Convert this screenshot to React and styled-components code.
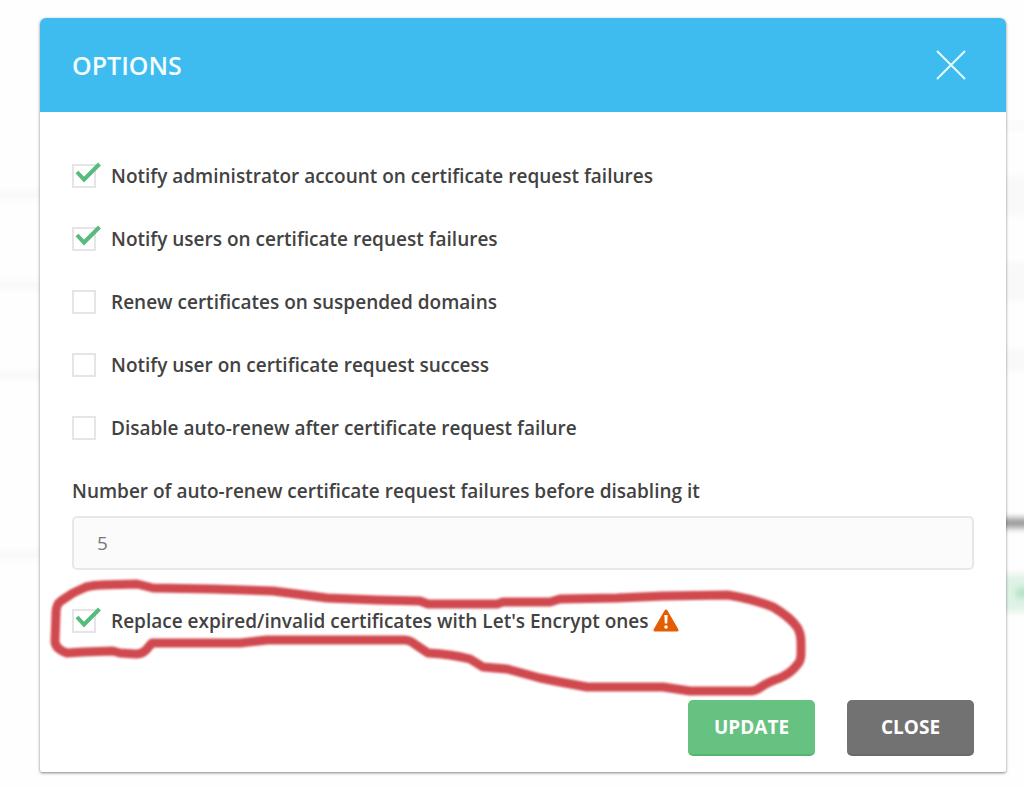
import React, { useState } from 'react';
import styled, { createGlobalStyle } from 'styled-components';

const GlobalStyle = createGlobalStyle`
  * {
    box-sizing: border-box;
  }
  body {
    margin: 0;
    background: #fefefe;
    color: #424242;
    font-family: 'Open Sans', 'Noto Sans', sans-serif;
  }
`;

const Page = styled.main`
  position: relative;
  min-height: 100vh;
  padding: 18px 18px 14px 40px;
  overflow: hidden;
`;

/* blurred page behind the dialog */
const Backdrop = styled.div`
  position: absolute;
  inset: 0 -8px;
  display: flex;
  justify-content: space-between;
  filter: blur(3px);
`;
const TableEdge = styled.div`
  display: flex;
  flex-direction: column;
  width: 56px;
  padding-top: 190px;
`;
const TableRow = styled.div`
  height: ${({ $tall }) => ($tall ? 180 : 90)}px;
  border-top: 10px solid #f9f9f9;
`;
const SideEdge = styled.div`
  display: flex;
  flex-direction: column;
  gap: 46px;
  width: 56px;
  padding-top: 122px;
`;
const SideBlock = styled.div`
  display: flex;
  justify-content: flex-end;
  align-items: center;
  height: ${({ $height }) => $height}px;
  background: ${({ $color }) => $color || '#f9f9f9'};
`;
const SideMark = styled.div`
  width: 16px;
  height: 10px;
  background: #b5e0c4;
`;

const Dialog = styled.section`
  position: relative;
  border-radius: 6px 6px 2px 2px;
  background: #fff;
  box-shadow: 0 1px 3px rgba(0, 0, 0, 0.5);
`;
const Header = styled.header`
  display: flex;
  justify-content: space-between;
  align-items: center;
  height: 94px;
  padding: 0 40px 0 32px;
  border-radius: 6px 6px 0 0;
  background: #3ebbef;
`;
const Title = styled.h1`
  margin: 0;
  color: #f4fdff;
  font-size: 25px;
  font-weight: 600;
`;
const CloseIcon = styled.button`
  display: flex;
  padding: 0;
  border: 0;
  background: none;
  cursor: pointer;
`;

const Form = styled.form`
  display: flex;
  flex-direction: column;
  gap: 35px;
  padding: 50px 32px 16px;
`;
const Option = styled.div`
  position: relative;
  display: flex;
  align-items: center;
  gap: 4px;
  height: 28px;
`;
const OptionLabel = styled.label`
  display: flex;
  align-items: center;
  gap: 15px;
  font-size: 19px;
  font-weight: 600;
  line-height: 28px;
  cursor: pointer;
`;
const Tick = styled.span`
  display: grid;
  width: 24px;

  > * {
    grid-area: 1 / 1;
  }
`;
const Checkbox = styled.input`
  appearance: none;
  width: 24px;
  height: 24px;
  margin: 0;
  border: 2px solid #e6e4e6;
  background: #fff;
  cursor: pointer;
`;
const TickMark = styled.svg`
  overflow: visible;
  pointer-events: none;
`;
const Circled = styled.svg`
  position: absolute;
  top: -33px;
  left: -24px;
  pointer-events: none;
`;

const Field = styled.div`
  display: flex;
  flex-direction: column;
  gap: 11px;
  padding-bottom: 2px;
`;
const FieldLabel = styled.label`
  font-size: 19px;
  font-weight: 600;
  line-height: 28px;
`;
const TextInput = styled.input`
  width: 100%;
  height: 54px;
  padding: 0 23px;
  border: 2px solid #e8e8e8;
  border-radius: 5px;
  background: #fbfbfb;
  color: #777;
  font-family: inherit;
  font-size: 19px;
`;

const Actions = styled.div`
  display: flex;
  justify-content: flex-end;
  gap: 32px;
  padding-top: 30px;
`;
const Button = styled.button`
  min-width: 127px;
  height: 56px;
  padding: 0 24px;
  border: 0;
  border-bottom: 2px solid ${({ $edge }) => $edge};
  border-radius: 5px;
  background: ${({ $color }) => $color};
  color: #fff;
  font-family: inherit;
  font-size: 19px;
  font-weight: 700;
  cursor: pointer;
`;

const options = [
  { id: 'notify-admin', text: 'Notify administrator account on certificate request failures', on: true },
  { id: 'notify-users', text: 'Notify users on certificate request failures', on: true },
  { id: 'renew-suspended', text: 'Renew certificates on suspended domains', on: false },
  { id: 'notify-success', text: 'Notify user on certificate request success', on: false },
  { id: 'disable-renew', text: 'Disable auto-renew after certificate request failure', on: false },
];

const CheckOption = ({ id, text, on, children }) => {
  const [checked, setChecked] = useState(on);

  return (
    <Option>
      <OptionLabel htmlFor={id}>
        <Tick>
          <Checkbox id={id} type='checkbox' checked={checked} onChange={() => setChecked(!checked)} />
          {checked && (
            <TickMark width='24' height='24' viewBox='0 0 24 24' fill='none' stroke='#57bb7e' strokeWidth='4'>
              <path d='M5 8 L12 15.5 L27.5 0' />
            </TickMark>
          )}
        </Tick>
        {text}
      </OptionLabel>
      {children}
    </Option>
  );
};

const App = () => {
  const [failures, setFailures] = useState('5');

  return (
    <>
      <GlobalStyle />
      <Page>
        <Backdrop aria-hidden='true'>
          <TableEdge>
            <TableRow />
            <TableRow />
            <TableRow $tall />
            <TableRow />
          </TableEdge>
          <SideEdge>
            <SideBlock $height={8} />
            <SideBlock $height={40} />
            <SideBlock $height={40} />
            <SideBlock $height={24} />
            <SideBlock $height={54} $color='transparent' />
            <SideBlock $height={10} $color='#999' />
            <SideBlock $height={38} $color='#def3e5'>
              <SideMark />
            </SideBlock>
          </SideEdge>
        </Backdrop>
        <Dialog role='dialog' aria-labelledby='options-title'>
          <Header>
            <Title id='options-title'>OPTIONS</Title>
            <CloseIcon type='button' aria-label='Close'>
              <svg width='30' height='30' viewBox='0 0 30 30' stroke='#e6fbff' strokeWidth='2'>
                <path d='M1 1 L29 29 M29 1 L1 29' />
              </svg>
            </CloseIcon>
          </Header>
          <Form onSubmit={(e) => e.preventDefault()}>
            {options.map((option) => (
              <CheckOption key={option.id} {...option} />
            ))}
            <Field>
              <FieldLabel htmlFor='failures'>Number of auto-renew certificate request failures before disabling it</FieldLabel>
              <TextInput id='failures' type='text' value={failures} onChange={(e) => setFailures(e.target.value)} />
            </Field>
            <CheckOption id='replace-expired' text="Replace expired/invalid certificates with Let's Encrypt ones" on>
              <svg width='26' height='24' viewBox='0 0 26 24'>
                <path d='M13 2 L24 21 H2 Z' fill='#e65c00' stroke='#e65c00' strokeWidth='3' strokeLinejoin='round' />
                <path d='M11.3 6 H14.7 L14.2 14.5 H11.8 Z' fill='#fff' />
                <circle cx='13' cy='18' r='1.8' fill='#fff' />
              </svg>
              <Circled width='760' height='124' viewBox='48 574 760 124' fill='none' stroke='#d04a4f' strokeWidth='9' strokeLinejoin='round'>
                <defs>
                  <filter id='soft'>
                    <feGaussianBlur stdDeviation='1.2' />
                  </filter>
                </defs>
                <path
                  filter='url(#soft)'
                  d='M73 593 L86 587 Q95 585 100 585 L137 584 L153 588 L213 589 L273 591 L327 598 L377 600 L420 601 L428 604 L497 604 L503 602 L550 602 L560 599 L617 598 L663 596 L728 595 Q753 599 773 607 Q790 617 797 627 Q801 633 801 643 L801 654 Q801 661 797 665 Q791 673 780 678 Q768 682 761 687 Q756 691 750 691 L690 691 L663 687 L587 687 L560 682 L540 678 L507 669 L483 667 L470 659 Q450 654 428 653 L416 645 Q410 640 405 640 L267 640 L240 643 L152 643 L146 650 Q142 654 136 654 L120 653 L113 651 L83 652 L67 653 Q55 649 55 641 L56 613 Q56 604 61 601 Z'
                />
              </Circled>
            </CheckOption>
            <Actions>
              <Button type='submit' $color='#66c281' $edge='#56b571'>UPDATE</Button>
              <Button type='button' $color='#727272' $edge='#6a6a6a'>CLOSE</Button>
            </Actions>
          </Form>
        </Dialog>
      </Page>
    </>
  );
};

export default App;
